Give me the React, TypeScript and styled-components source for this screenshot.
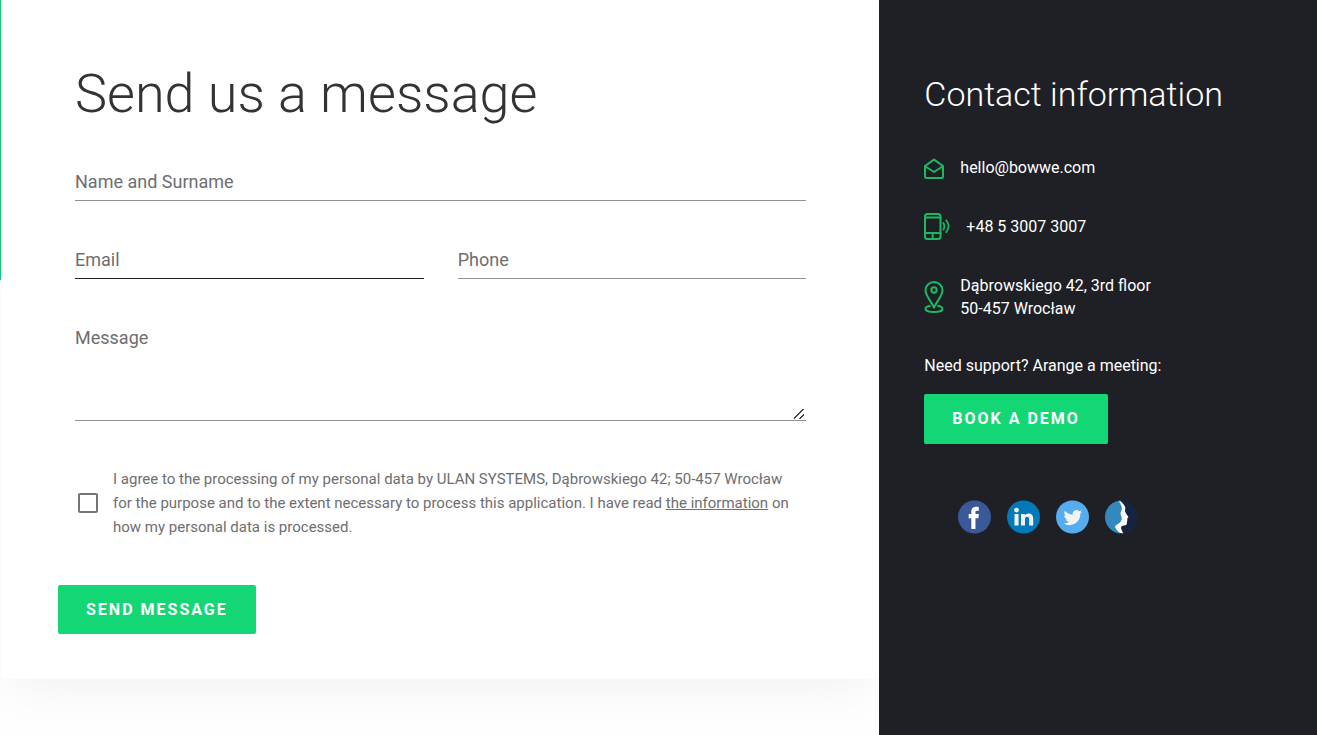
import React from "react";
import styled, { createGlobalStyle } from "styled-components";

const GlobalStyle = createGlobalStyle`
  *, *::before, *::after { box-sizing: border-box; }
  body {
    margin: 0;
    background: #fefefe;
    color: #6e6e70;
    font-family: Roboto, "Liberation Sans", sans-serif;
  }
`;

const Page = styled.div`
  display: grid;
  grid-template-columns: minmax(0, 667fr) minmax(0, 332fr);
  min-height: 100vh;
`;

const Main = styled.main`
  overflow: hidden;
  padding-bottom: 56px;
  padding-left: 1px;
  background: linear-gradient(#1fcb82, #1fcb82) 0 0 / 1px 280px no-repeat;
`;

const Card = styled.form`
  display: flex;
  flex-direction: column;
  padding: 62px 73px 45px 74px;
  background: #fff;
  box-shadow: 0 16px 48px -10px rgba(0, 0, 0, 0.06);
`;

const Title = styled.h1`
  margin: 0 0 36px;
  color: #333;
  font-size: 54px;
  font-weight: 300;
  line-height: 64px;
`;

const Fields = styled.div`
  display: grid;
  grid-template-columns: 1fr 1fr;
  gap: 39px 34px;
`;

const Field = styled.div<{ $wide?: boolean }>`
  display: grid;
  grid-column: ${(p) => (p.$wide ? "1 / -1" : "auto")};
`;

const FieldLabel = styled.label`
  grid-area: 1 / 1;
  align-self: start;
  justify-self: start;
  font-size: 18px;
  line-height: 39px;
  pointer-events: none;
`;

const Input = styled.input<{ $active?: boolean }>`
  grid-area: 1 / 1;
  width: 100%;
  height: 39px;
  padding: 0;
  border: 0;
  border-bottom: 1px solid ${(p) => (p.$active ? "#212121" : "#929292")};
  border-radius: 0;
  outline: 0;
  background: transparent;
  font: inherit;
  font-size: 18px;
`;

const TextArea = styled.textarea`
  grid-area: 1 / 1;
  width: 100%;
  height: 103px;
  padding: 8px 0;
  border: 0;
  border-bottom: 1px solid #929292;
  outline: 0;
  background: transparent;
  font: inherit;
  font-size: 18px;
  resize: vertical;

  &::-webkit-resizer {
    background: linear-gradient(
        135deg,
        transparent 45%,
        #444 45%,
        #444 55%,
        transparent 55%,
        transparent 71%,
        #444 71%,
        #444 81%,
        transparent 81%
      )
      right 2px bottom 1px / 10px 10px no-repeat;
  }
`;

const Consent = styled.div`
  display: flex;
  align-items: center;
  gap: 15px;
  margin: 46px 0;
  padding: 0 4px 0 3px;
  font-size: 15px;
  line-height: 24px;
`;

const Checkbox = styled.input`
  flex: none;
  appearance: none;
  width: 20px;
  height: 20px;
  margin: 0;
  border: 2px solid #757575;
  border-radius: 2px;
  &:checked { background: #13d775; }
`;

const InlineLink = styled.a`
  color: inherit;
`;

const Button = styled.button`
  align-self: flex-start;
  height: 50px;
  padding: 0 28px;
  border: 0;
  border-radius: 2px;
  background: #13d775;
  color: #fff;
  font: 700 16px/20px Roboto, "Liberation Sans", sans-serif;
  letter-spacing: 2px;
  text-transform: uppercase;
  white-space: nowrap;
  cursor: pointer;
`;

const SubmitButton = styled(Button)`
  height: 49px;
  margin-left: -17px;
`;

const Sidebar = styled.aside`
  display: flex;
  flex-direction: column;
  padding: 74px 45px 45px;
  background: #1f2026;
  color: #fff;
  font-size: 16px;
  line-height: 23px;
`;

const SideTitle = styled.h2`
  margin: 0 0 42px;
  font-size: 34px;
  font-weight: 300;
  line-height: 40px;
`;

const Contacts = styled.address`
  display: flex;
  flex-direction: column;
  gap: 34px;
  margin-bottom: 34px;
  font-style: normal;
`;

const ContactRow = styled.div`
  display: flex;
  align-items: center;
  gap: 16px;
  color: #1bb962;
`;

const ContactText = styled.span`
  color: #fff;
`;

const ContactLink = styled.a`
  color: #fff;
  text-decoration: none;
`;

const Support = styled.p`
  margin: 0 0 17px;
`;

const Socials = styled.nav`
  display: flex;
  gap: 16px;
  margin-top: 56px;
  padding-left: 34px;
`;

const SocialLink = styled.a`
  display: block;
  width: 33px;
  height: 34px;
  svg { display: block; width: 100%; height: 100%; }
`;

const MailIcon = () => (
  <svg width="20" height="22" viewBox="0 0 20 22" fill="none" stroke="currentColor" strokeWidth="2" strokeLinejoin="round">
    <path d="M1 9 10 2.600 19 9v10.500q0 1.500-1.500 1.500h-15Q1 21 1 19.500z" />
    <path d="m1.500 9.500 8.500 5.500 8.500-5.500" />
  </svg>
);

const PhoneIcon = () => (
  <svg width="26" height="27" viewBox="0 0 26 27" fill="none" stroke="currentColor" strokeWidth="2" strokeLinecap="round">
    <rect x="1" y="1" width="15.500" height="25" rx="2.500" />
    <path d="M1 4.500h15.500M1 20h15.500" />
    <path d="M8.700 22v2" />
    <path d="M19.400 10q2 3.300 0 6.600M22.300 7.500q4.600 5.800 0 11.600" strokeWidth="1.800" />
  </svg>
);

const PinIcon = () => (
  <svg width="20" height="32" viewBox="0 0 20 32" fill="none" stroke="currentColor" strokeWidth="2" strokeLinejoin="round">
    <path d="M10 26.500C8 21.800 1.500 14.500 1.500 9.500a8.500 8.500 0 0 1 17 0c0 5-6.500 12.300-8.500 17z" />
    <circle cx="10" cy="9" r="2.700" />
    <path d="M6.500 24.800C3.500 25.300 1.500 26.300 1.500 27.700c0 1.900 3.800 3.300 8.500 3.300s8.500-1.400 8.500-3.300c0-1.400-2-2.400-5-2.900" />
  </svg>
);

const FacebookLogo = () => (
  <svg viewBox="0 0 34 34">
    <circle cx="17" cy="17" r="17" fill="#3b5998" />
    <path fill="#fff" d="M13.700 29.300V18.200H11v-4.200h2.700v-2.600c0-3.400 1.900-4.900 5-4.900 1.200 0 2.100.1 2.700.2v3.800h-1.900c-1.200 0-1.500.6-1.500 1.500v2h3.500l-.5 4.200h-3v11.100z" />
  </svg>
);

const LinkedinLogo = () => (
  <svg viewBox="0 0 34 34">
    <circle cx="17" cy="17" r="17" fill="#007ab9" />
    <circle cx="9.800" cy="9.900" r="2.500" fill="#f1f2f2" />
    <path fill="#f1f2f2" d="M7.700 13.800h4.200v11.900H7.700zM14.400 13.800h4v1.700c.7-1.100 2-2 3.900-2 3.200 0 4.700 2 4.700 5.500v6.700h-4.200v-6.200c0-1.700-.6-2.700-2-2.700-1.500 0-2.300 1-2.300 2.700v6.200h-4.100z" />
  </svg>
);

const TwitterLogo = () => (
  <svg viewBox="0 0 34 34">
    <circle cx="17" cy="17" r="17" fill="#55acee" />
    <path fill="#f1f2f2" transform="translate(7.800 8) scale(.8)" d="M23.950 4.570a10 10 0 0 1-2.820.77 4.960 4.960 0 0 0 2.160-2.720 9.900 9.900 0 0 1-3.120 1.180 4.920 4.920 0 0 0-8.380 4.480C7.690 8.090 4.070 6.130 1.640 3.160a4.820 4.820 0 0 0-.67 2.480c0 1.710.87 3.210 2.190 4.100a4.900 4.900 0 0 1-2.230-.62v.06a4.920 4.920 0 0 0 3.950 4.830 5 5 0 0 1-2.210.08 4.940 4.940 0 0 0 4.600 3.420A9.870 9.870 0 0 1 0 19.540a14 14 0 0 0 7.550 2.210c9.050 0 14-7.500 14-13.990 0-.21 0-.42-.02-.63a9.940 9.940 0 0 0 2.460-2.550z" />
  </svg>
);

const ProfileLogo = () => (
  <svg viewBox="0 0 34 34">
    <circle cx="17" cy="17" r="17" fill="#18233f" />
    <path fill="#fff" d="M14 .3C17 .5 18.500 3 20.500 6c1 2-.3 3.500.3 5.500.8 2 2.400 3.800 3.200 5.500.2 1-1.300 1.200-1.200 1.800.1.700.5 1 .1 1.700-.3.500.1 1.200-.3 1.800-.2.800.2 1.700-.5 2.600-1.200 1-3.700.2-5 1.600-1.400 1.800.2 4.500 1.700 7.400L13 33 8 24z" />
    <path fill="#3388bd" d="M17 0A17 17 0 0 0 0 17a17 17 0 0 0 15.800 17c-1.800-2-4.200-3.800-5.300-6-.6-1.800 1-2.600 2.500-3.500 2.200-1.300 4-3.300 4.300-5.500.2-2-1.300-3.300-1.300-5.500 0-2.500 1.700-3.800 1.400-6.200C17 5 15.500 3 14.500 1z" />
  </svg>
);

export default function App() {
  return (
    <Page>
      <GlobalStyle />
      <Main>
        <Card onSubmit={(e) => e.preventDefault()}>
          <Title>Send us a message</Title>
          <Fields>
            <Field $wide>
              <FieldLabel htmlFor="name">Name and Surname</FieldLabel>
              <Input id="name" type="text" />
            </Field>
            <Field>
              <FieldLabel htmlFor="email">Email</FieldLabel>
              <Input id="email" type="email" $active />
            </Field>
            <Field>
              <FieldLabel htmlFor="phone">Phone</FieldLabel>
              <Input id="phone" type="tel" />
            </Field>
            <Field $wide>
              <FieldLabel htmlFor="message">Message</FieldLabel>
              <TextArea id="message" />
            </Field>
          </Fields>
          <Consent>
            <Checkbox id="consent" type="checkbox" />
            <label htmlFor="consent">
              I agree to the processing of my personal data by ULAN SYSTEMS, Dąbrowskiego 42; 50-457 Wrocław for the
              purpose and to the extent necessary to process this application. I have read{" "}
              <InlineLink href="#information">the information</InlineLink> on how my personal data is processed.
            </label>
          </Consent>
          <SubmitButton type="submit">Send message</SubmitButton>
        </Card>
      </Main>
      <Sidebar>
        <SideTitle>Contact information</SideTitle>
        <Contacts>
          <ContactRow>
            <MailIcon />
            <ContactLink href="mailto:hello@bowwe.com">hello@bowwe.com</ContactLink>
          </ContactRow>
          <ContactRow>
            <PhoneIcon />
            <ContactLink href="tel:+48530073007">+48 5 3007 3007</ContactLink>
          </ContactRow>
          <ContactRow>
            <PinIcon />
            <ContactText>
              Dąbrowskiego 42, 3rd floor
              <br />
              50-457 Wrocław
            </ContactText>
          </ContactRow>
        </Contacts>
        <Support>Need support? Arange a meeting:</Support>
        <Button type="button">Book a demo</Button>
        <Socials aria-label="Social media">
          <SocialLink href="#facebook" aria-label="Facebook"><FacebookLogo /></SocialLink>
          <SocialLink href="#linkedin" aria-label="LinkedIn"><LinkedinLogo /></SocialLink>
          <SocialLink href="#twitter" aria-label="Twitter"><TwitterLogo /></SocialLink>
          <SocialLink href="#profile" aria-label="Company profile"><ProfileLogo /></SocialLink>
        </Socials>
      </Sidebar>
    </Page>
  );
}
